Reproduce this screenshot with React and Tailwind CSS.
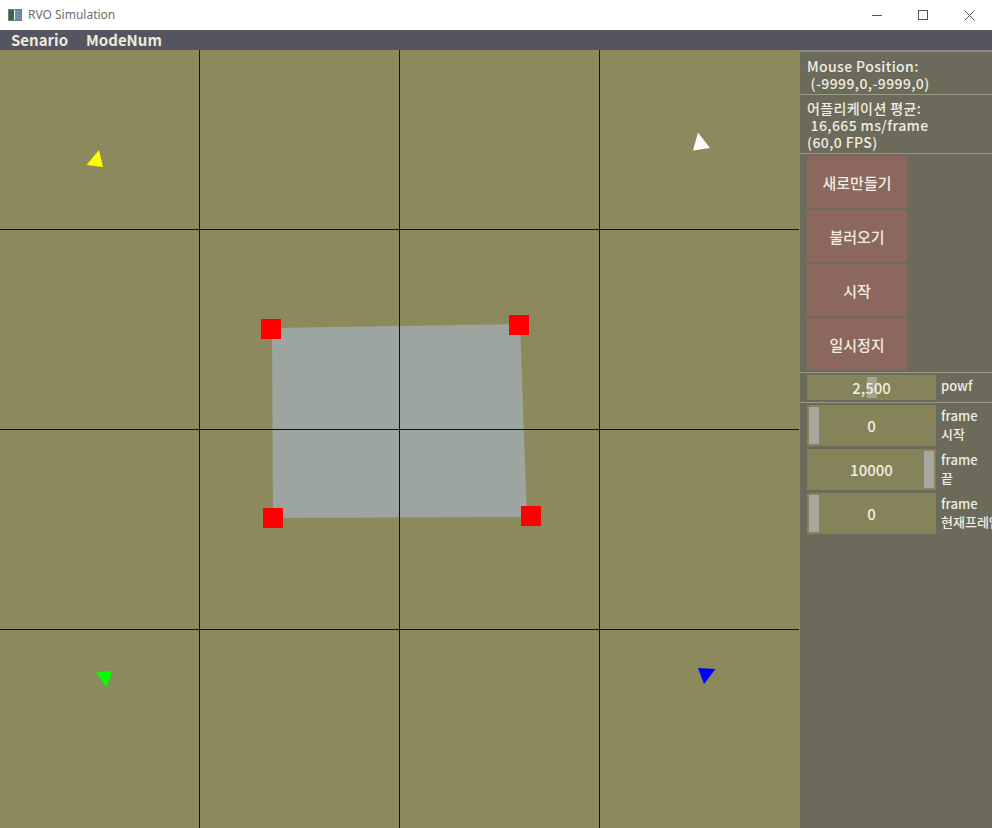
import React from 'react';

const font = { fontFamily: '"Noto Sans CJK KR", "Noto Sans", sans-serif' };

function Canvas() {
  return (
    <div className="relative w-[799px] h-full bg-[#8c8a5c] overflow-hidden">
      <svg className="absolute left-0 top-0" width="799" height="798" viewBox="0 0 799 798">
        <polygon points="272,298 520,294 527,487 273,488" fill="#9ea6a3" fillOpacity="0.95" />
        {[199, 399, 599].map((x) => (
          <line key={'v' + x} x1={x + 0.5} y1="0" x2={x + 0.5} y2="798" stroke="#111" strokeWidth="1" />
        ))}
        {[199, 399, 599].map((y) => (
          <line key={'h' + y} x1="0" y1={y + 0.5} x2="799" y2={y + 0.5} stroke="#111" strokeWidth="1" />
        ))}
        <rect x="261" y="289" width="20" height="20" fill="#ff0000" />
        <rect x="509" y="285" width="20" height="20" fill="#ff0000" />
        <rect x="263" y="478" width="20" height="20" fill="#ff0000" />
        <rect x="521" y="476" width="20" height="20" fill="#ff0000" />
        <polygon points="99,120 103,137 86.5,135" fill="#ffff00" />
        <polygon points="698,102.5 710,118 693,120.5" fill="#ffffff" />
        <polygon points="96,642.5 112.5,641 106.5,657" fill="#00ff00" />
        <polygon points="698,638 715.5,639 704,654" fill="#0000ff" />
      </svg>
    </div>
  );
}

function Btn({ children }) {
  return (
    <div className="w-[100px] h-[52px] bg-[#8c675d] flex items-center justify-center text-[15px] font-medium text-[#f1ede0]">
      {children}
    </div>
  );
}

function Slider({ value, label1, label2, grab, tall }) {
  return (
    <div className="flex items-start gap-[5px]">
      <div className={`relative shrink-0 w-[129px] ${tall ? 'h-[41px]' : 'h-[25px]'} bg-[#858359] flex items-center justify-center`}>
        {grab === 'left' && <div className="absolute left-[2px] top-[2px] bottom-[2px] w-[10px] bg-[#a9a8a0]" />}
        {grab === 'right' && <div className="absolute right-[2px] top-[2px] bottom-[2px] w-[10px] bg-[#a9a8a0]" />}
        {grab === 'mid' && <div className="absolute left-[60px] top-[2px] bottom-[2px] w-[10px] bg-[#a3a290]" />}
        <span className="relative text-[15px] font-medium text-[#f1ede0]">{value}</span>
      </div>
      <div className="text-[13px] font-medium leading-[18px] text-[#f1ede0] pt-[2px] whitespace-nowrap">
        <div>{label1}</div>
        {label2 && <div>{label2}</div>}
      </div>
    </div>
  );
}

function Panel() {
  return (
    <div className="flex-1 h-full bg-[#6b6a5b] pt-[20px] overflow-hidden">
      <div className="h-full border-t-2 border-l border-[#8a8a7e] pl-[7px] text-[#f1ede0] text-[14px] tracking-[0.4px] font-medium leading-[17px]">
        <div className="pt-[6px] pb-[2px]">
          <div>Mouse Position:</div>
          <div>&nbsp;(-9999,0,-9999,0)</div>
        </div>
        <div className="h-px bg-[#9a9a86] -ml-[7px]" />
        <div className="pt-[5px] pb-[2px]">
          <div>어플리케이션 평균:</div>
          <div>&nbsp;16,665 ms/frame</div>
          <div>(60,0 FPS)</div>
        </div>
        <div className="h-px bg-[#9a9a86] -ml-[7px]" />
        <div className="flex flex-col gap-[2px] pt-[2px] pb-[2px] tracking-normal">
          <Btn>새로만들기</Btn>
          <Btn>불러오기</Btn>
          <Btn>시작</Btn>
          <Btn>일시정지</Btn>
        </div>
        <div className="h-px bg-[#9a9a86] -ml-[7px]" />
        <div className="pt-[2px] pb-[2px] tracking-normal">
          <Slider value="2,500" label1="powf" grab="mid" />
        </div>
        <div className="h-px bg-[#9a9a86] -ml-[7px]" />
        <div className="flex flex-col gap-[3px] pt-[2px] tracking-normal">
          <Slider value="0" label1="frame" label2="시작" grab="left" tall />
          <Slider value="10000" label1="frame" label2="끝" grab="right" tall />
          <Slider value="0" label1="frame" label2="현재프레임" grab="left" tall />
        </div>
      </div>
    </div>
  );
}

export default function App() {
  return (
    <div className="w-[992px] h-[828px] flex flex-col overflow-hidden bg-white" style={font}>
      <div className="h-[30px] flex items-center bg-white shrink-0">
        <div className="ml-[8px] w-[14px] h-[12px] border border-[#7a7a7a] bg-[#cfd8cf] flex">
          <div className="w-[5px] h-full bg-[#2f6a4a]" />
          <div className="w-[1px] h-full bg-[#ffffff]" />
          <div className="flex-1 bg-[#6c8fa8]" />
        </div>
        <span className="ml-[6px] text-[12px] text-[#6d6d6d]" style={{ fontFamily: '"Noto Sans", sans-serif' }}>
          RVO Simulation
        </span>
        <div className="ml-auto flex items-center h-full">
          <div className="w-[46px] h-full flex items-center justify-center">
            <div className="w-[10px] h-px bg-[#555]" />
          </div>
          <div className="w-[46px] h-full flex items-center justify-center">
            <div className="w-[10px] h-[10px] border border-[#555]" />
          </div>
          <div className="w-[46px] h-full flex items-center justify-center">
            <svg width="11" height="11" viewBox="0 0 11 11">
              <path d="M0.5 0.5 L10.5 10.5 M10.5 0.5 L0.5 10.5" stroke="#555" strokeWidth="1" />
            </svg>
          </div>
        </div>
      </div>
      <div className="relative flex-1 flex">
        <Canvas />
        <Panel />
        <div className="absolute top-0 left-0 right-0 h-[20px] bg-[#545560] flex items-center gap-[18px] pl-[11px] text-[15px] font-bold text-[#ecebdc]">
          <span>Senario</span>
          <span>ModeNum</span>
        </div>
      </div>
    </div>
  );
}
